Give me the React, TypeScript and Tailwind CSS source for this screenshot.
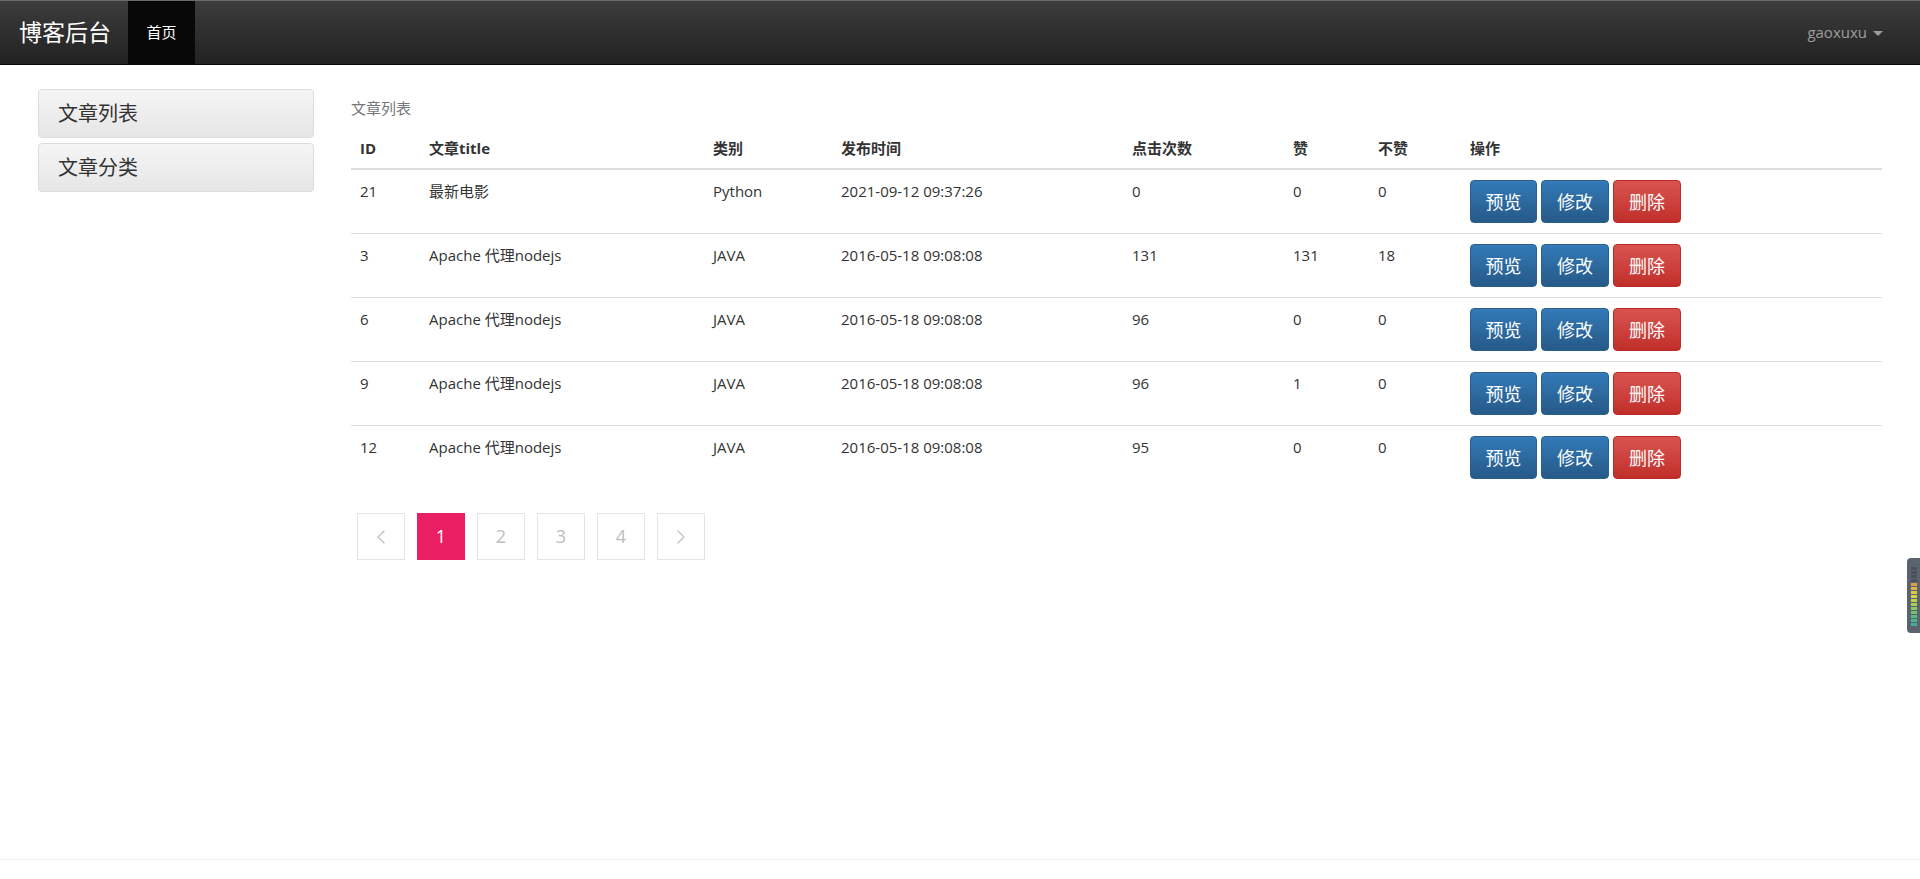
import { ChevronLeft, ChevronRight } from "lucide-react";

const rows = [
  { id: "21", title: "最新电影", type: "Python", time: "2021-09-12 09:37:26", hits: "0", up: "0", down: "0" },
  { id: "3", title: "Apache 代理nodejs", type: "JAVA", time: "2016-05-18 09:08:08", hits: "131", up: "131", down: "18" },
  { id: "6", title: "Apache 代理nodejs", type: "JAVA", time: "2016-05-18 09:08:08", hits: "96", up: "0", down: "0" },
  { id: "9", title: "Apache 代理nodejs", type: "JAVA", time: "2016-05-18 09:08:08", hits: "96", up: "1", down: "0" },
  { id: "12", title: "Apache 代理nodejs", type: "JAVA", time: "2016-05-18 09:08:08", hits: "95", up: "0", down: "0" },
];

const cols = "grid grid-cols-[69px_284px_128px_291px_161px_85px_92px_1fr]";

function Navbar() {
  return (
    <header className="flex h-[65px] shrink-0 items-stretch border-t border-b border-t-[#6a6a6a] border-b-[#080808] bg-gradient-to-b from-[#3c3c3c] to-[#222222]">
      <div className="flex w-[128px] items-center pl-[19px] text-[23px] leading-none text-white">博客后台</div>
      <div className="flex w-[67px] items-center justify-center bg-[#080808] text-[15px] text-white">首页</div>
      <div className="ml-auto mr-[37px] flex items-center gap-[6px] text-[15px] text-[#9d9d9d]">
        <span>gaoxuxu</span>
        <span className="mt-[2px] h-0 w-0 border-x-[5px] border-t-[5px] border-x-transparent border-t-[#9d9d9d]" />
      </div>
    </header>
  );
}

function Sidebar() {
  return (
    <aside className="flex w-[276px] shrink-0 flex-col gap-[5px]">
      {["文章列表", "文章分类"].map((label) => (
        <div
          key={label}
          className="flex h-[49px] items-center rounded-[4px] border border-[#dcdcdc] bg-gradient-to-b from-[#f5f5f5] to-[#e6e6e6] pl-[19px] text-[20px] text-[#333]"
        >
          {label}
        </div>
      ))}
    </aside>
  );
}

function ActionButtons() {
  return (
    <div className="flex gap-[4px]">
      <button className="h-[43px] w-[67px] rounded-[4px] border border-[#2b5f8e] bg-gradient-to-b from-[#337ab7] to-[#265a88] text-[18px] text-white">预览</button>
      <button className="h-[43px] w-[68px] rounded-[4px] border border-[#2b5f8e] bg-gradient-to-b from-[#337ab7] to-[#265a88] text-[18px] text-white">修改</button>
      <button className="h-[43px] w-[68px] rounded-[4px] border border-[#b92c28] bg-gradient-to-b from-[#d9534f] to-[#c12e2a] text-[18px] text-white">删除</button>
    </div>
  );
}

function ArticleTable() {
  return (
    <div className="flex-1">
      <p className="pt-[9px] text-[15px] leading-[20px] text-[#777]">文章列表</p>
      <div className={`${cols} border-b-2 border-[#dddddd] pt-[20px] pb-[10px] text-[15px] font-bold leading-[20px] text-[#333]`}>
        {["ID", "文章title", "类别", "发布时间", "点击次数", "赞", "不赞", "操作"].map((h) => (
          <div key={h} className="px-[9px]">{h}</div>
        ))}
      </div>
      {rows.map((r, i) => (
        <div
          key={r.id}
          className={`${cols} h-[63px] text-[15px] leading-[20px] text-[#333] ${i > 0 ? "box-content border-t border-[#dddddd]" : ""}`}
        >
          <div className="px-[9px] pt-[11px]">{r.id}</div>
          <div className="px-[9px] pt-[11px]">{r.title}</div>
          <div className="px-[9px] pt-[11px]">{r.type}</div>
          <div className="px-[9px] pt-[11px]">{r.time}</div>
          <div className="px-[9px] pt-[11px]">{r.hits}</div>
          <div className="px-[9px] pt-[11px]">{r.up}</div>
          <div className="px-[9px] pt-[11px]">{r.down}</div>
          <div className="px-[9px] pt-[10px]">
            <ActionButtons />
          </div>
        </div>
      ))}
      <nav className="ml-[6px] mt-[24px] flex gap-[12px] text-[18px] text-[#bdbdbd]">
        <span className="flex h-[47px] w-[48px] items-center justify-center border border-[#e5e5e5]">
          <ChevronLeft size={24} strokeWidth={1.2} />
        </span>
        <span className="flex h-[47px] w-[48px] items-center justify-center bg-[#e91e63] text-white">1</span>
        {["2", "3", "4"].map((n) => (
          <span key={n} className="flex h-[47px] w-[48px] items-center justify-center border border-[#e5e5e5]">{n}</span>
        ))}
        <span className="flex h-[47px] w-[48px] items-center justify-center border border-[#e5e5e5]">
          <ChevronRight size={24} strokeWidth={1.2} />
        </span>
      </nav>
    </div>
  );
}

function MeterTab() {
  const bars = ["#4a505c", "#4a505c", "#4a505c", "#4a505c", "#e0a040", "#e3b640", "#e2c840", "#d6d244", "#c2d24a", "#a8d050", "#8ccc5c", "#70c46c", "#5cbc80", "#4cb490", "#44ac98"];
  return (
    <div className="absolute right-0 top-[558px] flex h-[75px] w-[13px] flex-col gap-[1px] rounded-l-[4px] bg-[#5b6270] pl-[4px] pt-[9px]">
      {bars.map((c, i) => (
        <span key={i} className="h-[3px] w-[6px]" style={{ backgroundColor: c }} />
      ))}
    </div>
  );
}

export default function App() {
  return (
    <div className="relative flex h-[879px] flex-col bg-white font-['Open_Sans','Noto_Sans_CJK_SC',sans-serif]">
      <Navbar />
      <main className="flex flex-1 gap-[37px] px-[38px] pt-[24px]">
        <Sidebar />
        <ArticleTable />
      </main>
      <footer className="h-[20px] border-t border-[#eeeeee]" />
      <MeterTab />
    </div>
  );
}
